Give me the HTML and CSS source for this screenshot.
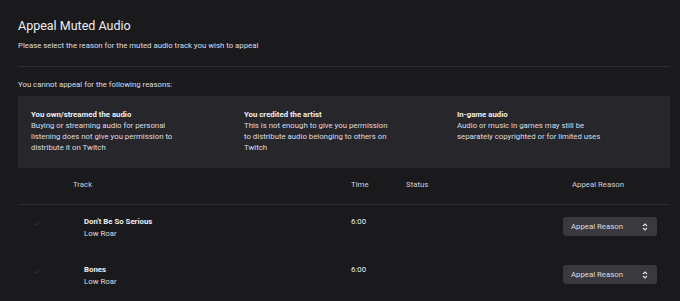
FILE: index.html
```html
<!DOCTYPE html>
<html lang="en">
<head>
    <meta charset="UTF-8">
    <title>Appeal Muted Audio</title>
    <link rel="stylesheet" href="styles.css">
</head>
<body>
    <h1 class="title">Appeal Muted Audio</h1>
    <p class="subtitle">Please select the reason for the muted audio track you wish to appeal</p>
    <div class="divider"></div>

    <p class="notice">You cannot appeal for the following reasons:</p>
    <div class="reasons">
        <div class="reason">
            <strong>You own/streamed the audio</strong>
            <span>Buying or streaming audio for personal listening does not give you permission to distribute it on Twitch</span>
        </div>
        <div class="reason">
            <strong>You credited the artist</strong>
            <span>This is not enough to give you permission to distribute audio belonging to others on Twitch</span>
        </div>
        <div class="reason">
            <strong>In-game audio</strong>
            <span>Audio or music in games may still be separately copyrighted or for limited uses</span>
        </div>
    </div>

    <!-- tabla de pistas -->
    <div class="tracks">
        <div class="row head">
            <div></div>
            <div>Track</div>
            <div>Time</div>
            <div>Status</div>
            <div class="reason-head">Appeal Reason</div>
        </div>
        <div class="row">
            <div class="check"><svg width="7" height="5" viewBox="0 0 7 5"><path d="M0.5 2.5 L2.5 4.3 L6.5 0.5" fill="none" stroke="#36363b" stroke-width="1"/></svg></div>
            <div class="track"><strong>Don't Be So Serious</strong><span>Low Roar</span></div>
            <div class="time">6:00</div>
            <div></div>
            <div><button class="select">Appeal Reason<svg width="6" height="8" viewBox="0 0 6 8"><path d="M1 3 L3 1 L5 3 M1 5 L3 7 L5 5" fill="none" stroke="#dedee3" stroke-width="1.1"/></svg></button></div>
        </div>
        <div class="row">
            <div class="check"><svg width="7" height="5" viewBox="0 0 7 5"><path d="M0.5 2.5 L2.5 4.3 L6.5 0.5" fill="none" stroke="#36363b" stroke-width="1"/></svg></div>
            <div class="track"><strong>Bones</strong><span>Low Roar</span></div>
            <div class="time">6:00</div>
            <div></div>
            <div><button class="select">Appeal Reason<svg width="6" height="8" viewBox="0 0 6 8"><path d="M1 3 L3 1 L5 3 M1 5 L3 7 L5 5" fill="none" stroke="#dedee3" stroke-width="1.1"/></svg></button></div>
        </div>
    </div>
</body>
</html>
```
FILE: styles.css
```css
/* Estilos de la página */
body {
    font-family: Roboto, "Liberation Sans", sans-serif;
    background: #1a1a1d;
    color: #dedee3;
    margin: 0;
    padding: 0 10px 0 18px;
    font-size: 7.8px;
}
.title {
    font-size: 12.5px;
    font-weight: normal;
    color: #efeff1;
    line-height: 20px;
    margin: 16px 0 0;
}
.subtitle {
    line-height: 12px;
    margin: 4px 0 0;
}
.divider {
    height: 1px;
    background: #2c2c31;
    margin-top: 14px;
}
.notice {
    line-height: 12px;
    margin: 12px 0 0;
}
.reasons {
    margin-top: 5px;
    background: #26262b;
    display: grid;
    grid-template-columns: 213px 213px 1fr;
    padding: 13px 13px 15px;
    line-height: 11px;
}
.reason strong {
    display: block;
    color: #efeff1;
}
.reason span {
    display: block;
    max-width: 146px;
}
.tracks {
    border-bottom: 1px solid #2c2c31;
}
.row {
    display: grid;
    grid-template-columns: 55px 278px 55px 157px 1fr;
    height: 48px;
    line-height: 12px;
    padding-top: 11px;
    box-sizing: border-box;
}
.row.head {
    height: 37px;
    color: #cfcfd4;
    border-bottom: 1px solid #2c2c31;
}
.reason-head {
    padding-left: 9px;
}
.check {
    padding: 5px 0 0 15px;
}
.check svg {
    display: block;
}
.track {
    padding-left: 11px;
}
.track strong {
    display: block;
    color: #efeff1;
}
.track span {
    display: block;
}
.time {
    color: #efeff1;
}
.select {
    display: flex;
    align-items: center;
    justify-content: space-between;
    width: 94px;
    height: 19px;
    margin-top: 1px;
    padding: 0 9px 0 8px;
    border: none;
    border-radius: 3px;
    background: #3a3a3e;
    color: #dedee3;
    font-family: inherit;
    font-size: 7.8px;
    cursor: pointer;
}
```
